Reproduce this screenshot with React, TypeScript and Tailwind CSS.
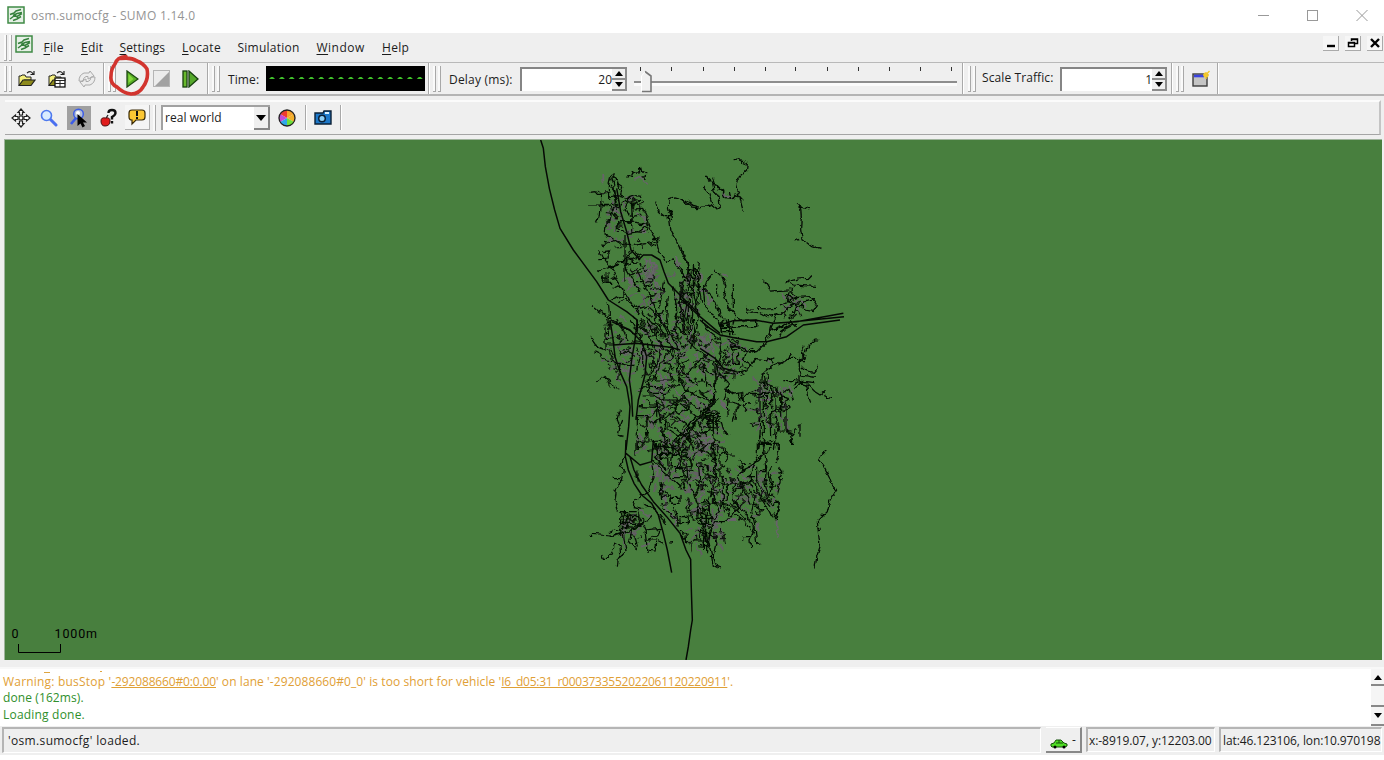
import React from "react";

const UI = "font-['Open_Sans','Noto_Sans',sans-serif] text-[12px] leading-[16px] whitespace-nowrap text-[#1c1c1c]";

/* ---------- small building blocks ---------- */

function Grip() {
  return (
    <div className="flex h-[26px] w-[8px] shrink-0 justify-between">
      <i className="w-[3px] border-r border-b border-[#a8a8a8] bg-[#fafafa]" />
      <i className="w-[3px] border-r border-b border-[#a8a8a8] bg-[#fafafa]" />
    </div>
  );
}

function Sep() {
  return <div className="h-[31px] w-[2px] shrink-0 border-l border-[#a9a9a9] bg-white" />;
}

function Logo() {
  return (
    <svg width="18" height="18" viewBox="0 0 18 18" className="shrink-0">
      <rect x="1" y="1" width="16" height="16" fill="#e6f0e6" stroke="#3f8a45" strokeWidth="1.5" />
      <path d="M3 8.500 7 7l2-2 5-1.500M6 9.500l4-2 5-1M3 13l4-3 3 .5 5-3M6 14.500l4-1.500 4-2.500M8 9l3 3" fill="none" stroke="#35803c" strokeWidth="1.500" />
    </svg>
  );
}

function Spinner() {
  return (
    <div className="flex w-[15px] flex-col bg-[#efefef]">
      <div className="flex h-[11px] items-center justify-center border-r-2 border-b-2 border-[#8c8c8c]">
        <svg width="8" height="5"><path d="M0 5 4 0 8 5z" fill="#000" /></svg>
      </div>
      <div className="flex h-[11px] items-center justify-center border-r-2 border-b-2 border-[#8c8c8c]">
        <svg width="8" height="5"><path d="M0 0 4 5 8 0z" fill="#000" /></svg>
      </div>
    </div>
  );
}

function NumberField({ value }: { value: string }) {
  return (
    <div className="flex h-[24px] w-[107px] shrink-0 border-t-2 border-l-2 border-[#858585] bg-white">
      <span className="flex-1 pt-[3px] text-right">{value}</span>
      <Spinner />
    </div>
  );
}

/* ---------- toolbar icons ---------- */

function OpenIcon({ config }: { config?: boolean }) {
  return (
    <svg width="18" height="18" viewBox="0 0 18 18" className="shrink-0">
      <path d="M1 15V6h2l1-1h3l1 2h5v3H6z" fill="#f3ee7b" stroke="#222" />
      <path d="M1 15.500 5 10h12l-4 5.500z" fill="#8d8a1c" stroke="#222" strokeWidth="1.200" />
      <path d="M9 3q4-3 6 1M12.500 4.500H16V1" fill="none" stroke="#222" strokeWidth="1.200" />
      {config && (
        <>
          <rect x="7" y="8" width="10" height="9" fill="#fff" stroke="#111" strokeWidth="1.300" />
          <path d="M7 10.500h10M12 10v7M7 13.500h10" stroke="#222" />
        </>
      )}
    </svg>
  );
}

function ReloadIcon() {
  return (
    <svg width="18" height="18" viewBox="0 0 18 18" fill="none" stroke="#aaa" className="shrink-0">
      <path d="M1 11Q1 5 6 3h5l1-2 4 5-6 3V6.500H8q-3 1-3 5zM17 7q0 6-5 8H7l-1 2-4-5 6-3v2.500h2q3-1 3-4.500z" fill="#ececec" />
    </svg>
  );
}

function PlayIcon() {
  return (
    <svg width="13" height="18" viewBox="0 0 13 18" className="shrink-0">
      <path d="M1 1v16l11-8z" fill="#58b025" stroke="#1e4a12" strokeWidth="1.3" />
      <path d="M2.5 4v9l5-4z" fill="#86d83f" />
    </svg>
  );
}

function StopIcon() {
  return (
    <svg width="17" height="17" viewBox="0 0 17 17" className="shrink-0">
      <rect x=".5" y=".5" width="16" height="16" fill="#ececec" stroke="#b5b5b5" />
      <path d="M16 2v14H2z" fill="#a2a2a2" />
    </svg>
  );
}

function StepIcon() {
  return (
    <svg width="17" height="18" viewBox="0 0 17 18" className="shrink-0">
      <rect x="1" y="1" width="4" height="16" fill="#68b92c" stroke="#173f10" strokeWidth="1.3" />
      <path d="M7 1v16l9-8z" fill="#55a82b" stroke="#173f10" strokeWidth="1.3" />
    </svg>
  );
}

function NewWindowIcon() {
  return (
    <svg width="18" height="18" viewBox="0 0 18 18" className="shrink-0">
      <rect x="1" y="4" width="14" height="12" fill="#c4c4c4" stroke="#3d3d3d" strokeWidth="1.4" />
      <path d="M2 6h10" stroke="#3b43e0" strokeWidth="2.600" />
      <path d="M14 2v7M11 5h6M12 3l4 4M17.500 1 12 7" stroke="#f3c82b" strokeWidth="1.4" />
    </svg>
  );
}

function MoveIcon() {
  return (
    <svg width="20" height="20" viewBox="0 0 20 20" fill="#fff" stroke="#222" strokeWidth="1.200" className="shrink-0">
      <path d="m10 1 3 3.500h-1.500v2.500h-3V4.500H7zM10 19l3-3.500h-1.500V13h-3v2.500H7zM1 10l3.500-3v1.500H7v3H4.500V13zM19 10l-3.500-3v1.500H13v3h2.500V13z" />
      <circle cx="10" cy="10" r="2" />
    </svg>
  );
}

function Magnifier() {
  return (
    <svg width="18" height="18" viewBox="0 0 18 18" className="shrink-0">
      <path d="m10 10 6 6" stroke="#4a6ff0" strokeWidth="3" strokeLinecap="round" />
      <circle cx="6.5" cy="6.5" r="5" fill="#d9ecff" stroke="#4d79ee" strokeWidth="1.6" />
    </svg>
  );
}

function ZoomPointer() {
  return (
    <svg width="24" height="24" viewBox="0 0 24 24" className="shrink-0">
      <path d="m9 12-5 6" stroke="#3b5ce8" strokeWidth="2.6" />
      <circle cx="11.500" cy="8" r="4.800" fill="#b4bfd6" stroke="#3d5ee6" strokeWidth="1.5" />
      <circle cx="11" cy="7" r="2" fill="#fff" />
      <path d="M10.500 8v12l3-2.500 2 4 2.500-1.500-2-3.500h4z" fill="#000" />
    </svg>
  );
}

function HelpApple() {
  return (
    <svg width="17" height="20" viewBox="0 0 17 20" className="shrink-0">
      <path d="M8.500 5q0-3 3.500-3t3.500 3q0 2-3.500 4v2.500M12 13v2.500" fill="none" stroke="#111" strokeWidth="2.4" />
      <path d="M5.500 11 8 7" stroke="#222" strokeWidth="1.3" />
      <path d="M1 13q0-4 4.500-3 4.500-1 4.500 3 0 5-5 5-4 0-4-5z" fill="#e01c1c" stroke="#4b1010" />
    </svg>
  );
}

function BubbleIcon() {
  return (
    <svg width="18" height="18" viewBox="0 0 18 18" className="shrink-0">
      <path d="M4 2h10q3 0 3 3v4q0 3-3 3H8l-4 4v-4q-3 0-3-3V5q0-3 3-3z" fill="#fcc733" stroke="#3b2b06" strokeWidth="1.2" />
      <path d="M9 3v5M9 9v2" stroke="#111" strokeWidth="2" />
    </svg>
  );
}

function ColorWheel() {
  return (
    <svg width="18" height="18" viewBox="0 0 18 18" className="shrink-0">
      <path d="M9 9V1a8 8 0 0 1 7 4z" fill="#f6a32b" />
      <path d="M9 9V1a8 8 0 0 0-7 4z" fill="#ef3b2f" />
      <path d="m9 9 7-4a8 8 0 0 1 0 8z" fill="#f4b02c" />
      <path d="m9 9 7 4a8 8 0 0 1-7 4z" fill="#6fe03a" />
      <path d="M9 9v8a8 8 0 0 1-7-4z" fill="#2fa8ea" />
      <path d="M9 9 2 13a8 8 0 0 1 0-8z" fill="#c44bd6" />
      <circle cx="9" cy="9" r="8" fill="none" stroke="#222" strokeWidth="1.3" />
    </svg>
  );
}

function CameraIcon() {
  return (
    <svg width="18" height="15" viewBox="0 0 18 15" className="shrink-0">
      <path d="M1 3h8l1-2h7v13H1z" fill="#1d78c9" stroke="#0b2036" strokeWidth="1.4" />
      <circle cx="8" cy="8.5" r="4" fill="#0b2036" />
      <circle cx="8" cy="8.5" r="2.5" fill="#8fd0f7" />
      <path d="M11 3h4" stroke="#d8f0ff" strokeWidth="2" />
    </svg>
  );
}

function CarIcon() {
  return (
    <svg width="18" height="10" viewBox="0 0 18 10" className="shrink-0">
      <path d="M1 7V5l3-1 2-3h5l3 3 3 1v2l-2 1H2z" fill="#4fdc25" stroke="#14530a" />
      <path d="M6 4h7M9 1v3" stroke="#14530a" />
      <circle cx="5" cy="8" r="1.5" />
      <circle cx="14" cy="8" r="1.5" />
    </svg>
  );
}

/* ---------- road network ---------- */

type Tile = { x: number; y: number; main?: string; roads: string; minor?: string };

/* Each tile keeps its own local grid at three units per pixel. */
const tiles: Tile[] = [
  {
    x: 530, y: 135,
    main: "M32 15 40 40 46 95 58 160 74 225 90 280 130 345 200 440 235 495 290 530 322 555 322 590M260 160 272 230 290 290 303 345 330 375M325 375 340 360 365 360 390 375 402 410 415 445 450 480 510 540",
    roads:
      "M290 128 295 120 305 125 310 112 325 110 332 98 335 110 350 115 348 130 335 128M236 195 235 150 242 122 250 120 262 150 270 165M180 172 195 170 202 178 214 178 216 208 234 208M174 210H234M210 212 208 240 202 262M250 125 262 135 265 150 278 158 272 178 285 182M234 186 262 182 290 190 310 182 334 184M234 215 250 205 268 215 288 195 304 210 330 195M240 210 245 235 238 262 224 275 222 300 240 306 265 322 288 332M262 260H300L355 268M262 258V292M264 280 290 296 325 290 355 270M292 185 305 205 306 235 305 290M310 222 338 220 350 246 365 290 380 320 384 340 410 380M278 330 310 332 370 322 385 312 370 310 362 322 378 335M308 248 335 240M310 290 350 292 356 280 340 275M285 300V440M205 415 220 400 250 392 268 378 296 374 325 385M222 330 214 326M232 324 222 322M206 348 220 372 232 376M220 350 236 348 238 372 205 374M216 425 240 428M220 418V445M228 418V445M234 418V445M218 445H244M218 365 245 400 262 440 290 480 310 515 330 540M232 400 270 388M248 430 264 425M248 460 262 452 280 460M244 495 270 485 285 470M265 500 285 490 300 505M184 514 210 532 255 560 300 590 320 600M235 500 238 530 236 600M226 570H250M300 345 290 370 285 395 310 440 330 470M282 392 302 388 310 375M300 420 335 410M310 440H338M322 400 345 450 360 480 375 520 395 560 415 600M340 460 365 450M352 485 380 475M360 510 390 500M375 540 405 530M310 510 330 520 355 512M380 200 388 232 405 245 425 245 422 230 412 236M425 255 415 215 418 192 432 186 465 195 485 210 510 218M415 245 420 285 440 320 450 345 470 380 475 405 480 450M410 380 430 375 460 420 475 440M400 440 395 480 388 520M415 480 410 550 420 600M430 455 440 520 435 560 460 600M455 450 450 510 470 560M475 450V600M490 395V470L500 520M505 380 500 430 510 470M310 545 345 590M335 530 375 570 380 600M355 520 410 570M245 125 255 170 262 225M250 160 262 200 245 230 262 250M240 150 256 170M292 205 285 225 300 240M315 345 295 355 300 375 325 365 320 352 335 360",
    minor: "M220 120V148M310 135 330 128 350 145M315 235 345 250 340 300M440 365V390H450L442 370M275 440 285 425 305 440 295 470M342 375 375 385 370 420 350 430 340 400M375 440 400 470 385 490M350 400 380 460 370 500M240 215 262 235M270 540 290 560M390 540 405 570M350 375 350 410M360 370 365 420M350 430 372 470",
  },
  {
    x: 680, y: 135,
    main: "M120 570 160 557 225 555 280 565 350 560 490 535M0 490 60 545 120 595M340 560 492 545",
    roads:
      "M164 74 178 72 186 82 202 88 200 105 172 135 168 152 172 170 180 185 182 200 190 230M80 128 105 148 125 165 135 188 155 190 175 180 190 196M98 128 105 150M110 150 130 170M70 156 85 170 95 205M98 145 102 165 118 195 120 215 112 220 100 210 85 215 72 212 55 218 35 216 0 190M148 170 152 188M165 175 168 190M78 126 112 155 136 186M348 206 362 218 364 250 362 280 366 312 380 320 395 332 424 341M350 208 388 222M343 318 360 313M250 437 262 445 275 468 300 466 325 465M320 440 355 432 385 430 392 422M320 440 340 450 405 454M338 455 335 480 350 490M318 480 340 495M330 460 322 500 340 505M202 516 206 534M202 522H222M235 520 260 522 290 520M208 535 238 532 262 545 300 538 320 520 345 505 360 515 375 500 400 495 392 482 355 484 335 495 300 510M400 495 412 512 400 530 375 525 360 510M350 510 340 540 325 550M230 557V575H140M270 600 275 570 295 535M275 585 300 580 330 560 350 575M300 590 330 570 355 565M160 450V520M100 402 115 415 130 430 138 450 132 480 145 515 165 540 190 558M98 415 80 440 72 460 90 480 108 500 120 540 140 560M70 460 75 510 90 535 110 550 122 580M110 485V450M0 335 20 375 25 400 20 430 40 470M40 390 45 440 35 490 38 540 30 600M60 400 55 450 65 500M0 390 15 430 5 470 20 510 10 560 18 600M25 400 50 405 50 430 60 460 50 510 55 550 45 600M30 430 48 430M30 450 58 455M30 475 55 480M0 440V520L12 600M120 558 125 600M140 560 150 600M165 548 155 575 165 600M120 575H165M130 590H165",
    minor: "M62 465 80 465 85 500M125 415 140 425M305 475 318 490M360 500 380 515M98 490 85 510M60 410 66 440M125 175 160 190",
  },
  {
    x: 580, y: 320,
    main: "M90 0 98 50 105 110 120 155 140 200 150 260 146 320 138 390M172 0 165 60 155 120 148 180 155 230 158 290M95 5 150 30 185 65 200 110 195 165 175 240 168 300M100 75 170 70 270 82 300 90",
    roads:
      "M30 50 50 80 75 90 98 92M46 95 65 105 75 120 100 122 112 150M52 182 68 172 85 178 108 205 118 208M75 20V90M75 40 88 35M75 55H90M76 72H104M80 0 85 20M110 0 130 30 145 65M150 0 190 70M180 0 200 40 225 90M200 0 230 50 255 90M225 0 250 40 280 90M240 0 275 45 295 90M290 0 285 40 310 85M320 0 310 30 340 80 390 120 420 125M340 0 345 40 335 90M370 0 380 30 420 60M120 110 145 90 165 110M120 130 160 140M170 80 180 110 170 150M188 70V140M185 95H200M105 130 120 130 116 180M210 95 222 120 210 160M240 90 232 130 205 180M270 90 240 135 215 190M200 180H292M250 150 270 160 280 190M185 200 260 205 300 190M185 225H220L250 240 295 240M205 180 210 220 260 220 275 205M230 240V290M200 240 210 255H240M176 260 230 262M172 290H200L204 360M172 290V390M175 365 240 360 290 390M285 90 290 150 310 200 350 230 390 240 405 235M290 130 320 170 350 200M300 100 290 135 330 120M320 165 360 120 390 100M330 200 300 240 260 260M400 120 405 180 403 240M404 240 340 300 280 370M415 235 360 290 300 360 275 390M400 250 345 310 300 390M375 270 390 280 420 280M380 290H420M385 300H420M380 310H420M385 290V330M400 285V340M412 285V340M370 320 420 325M365 345 390 330M240 300 280 280 290 250M220 310 260 280M235 270 245 310M270 260 300 280 330 260M290 290 340 330 360 350M265 310 330 360M255 320 300 350M250 340 290 390M300 250 350 290M310 230 360 270M320 330 340 390M350 300 380 350M300 345H350L370 380M255 300 250 350 260 390M118 275 112 295 120 320 115 345 130 350M128 300 120 320M260 90 280 110 255 130 280 145",
    minor: "M110 80 135 105 160 80M125 120 160 125 145 155 120 145M180 70 200 120M240 90 230 150 250 190M255 165 248 205 255 230M300 150 330 170M350 40 370 60 365 90 395 80 390 40M215 60 245 70 260 50M280 60 290 75M340 100 370 130 350 155M300 260 340 230 370 260M290 310 330 290M350 360 390 350 410 380M180 340 190 370M220 265 215 300M270 195 310 240M120 90 150 95M125 100 150 105",
  },
  {
    x: 700, y: 320,
    main: "M0 0 30 25 60 45 110 55 170 65 200 65 260 50 310 15 420 0M0 85 45 115 70 145 110 155",
    roads:
      "M60 25H95M65 0V50M85 0 90 50M125 0H170V20H110M195 70 210 35 245 20 275 0M240 50 250 30 290 10M60 50 65 90 50 140 55 160M80 60 110 75 130 95 160 85M95 70 100 95 120 80 95 75M100 100 98 130H115L112 100M115 75 150 100 165 95M140 95 130 120 160 140M150 95H170L195 70M65 90 75 105 60 150M72 160 110 158 140 150 165 115 200 120 220 110M205 110 220 130M60 155 75 180 85 190 80 215 72 240M72 210 90 215 100 222 122 218 128 240 150 215 180 205M115 220 120 240M85 245 130 255 140 270 135 275M85 230 82 260 85 290M120 250 105 275 100 305M110 280 108 300M130 245 128 215M355 60 345 60 320 85 312 115 300 120M308 80 312 115M275 100 262 118 240 130 215 140 200 152M265 115 298 115 298 150 305 165 345 172M295 125 312 125M350 130 352 145 340 160 320 155 305 140M300 165 300 190 320 195 325 225 332 245M250 182H285L345 188M280 195 310 180M285 210 300 185 320 200M320 190 345 215 360 225 375 215 380 230 396 232M200 155 185 165 182 185 200 190 205 160M190 170 195 200 205 205 200 190 225 205 240 220M150 220H210M180 190V300M190 205V290M200 215 198 260M215 200V310M228 200V270M242 215V290M250 215 270 205 280 240M240 230 265 235 255 250M240 245 272 265 258 270M258 240V330L275 335M258 335 275 340 278 372M295 315H300V350M275 345 290 325M225 290 235 330 225 360 220 390M172 390 180 350 182 290M190 300V380M210 290 212 350M175 370H235V390M60 295 70 330 90 345M45 110 48 180 40 250 0 320M35 240 10 290M20 290H60M25 300H62M20 310H55M30 285V330M40 285V330M50 290V320M0 250 30 270M0 210 25 240M0 130 40 165M10 130 20 200M0 340 40 330 45 390M150 245 130 260M205 260 195 270M210 280 245 260M0 180 38 200",
    minor: "M5 45 20 75M170 205 210 240 180 240 185 200M180 260V320M190 225 215 240M240 200 245 240M65 250 80 270 65 240M20 60 45 95M80 90 85 110M195 290 210 330M270 195 280 215 265 225M5 350 30 370 20 390M30 210 45 235M205 115 210 135M35 260 20 280",
  },
  {
    x: 580, y: 440,
    main: "M138 0 136 50 145 90 162 130 185 165 215 190 235 225 250 280 262 330 275 398M150 50 162 90 185 135 220 185 260 230 300 280 318 330 332 358 333 415 335 480 337 540 332 570 325 620 318 660M138 40 180 75 215 65 220 0",
    roads:
      "M134 50 120 80 130 90 125 120 110 145 105 180 112 215M96 108 104 116H122M118 215H170M118 225H165M120 240 170 240M122 215V275M130 215V270M140 218V265M150 220V250M135 230H180M118 250H175M32 283 60 285 95 288 160 268 215 232M88 278 105 270 130 280 150 270M92 290 130 280M175 210 182 240 195 270 200 310M130 260 175 262 182 250M195 270 240 265 235 285 200 300 230 300 250 310M200 300V330L225 333 230 308M130 280 138 335 115 355 112 380M98 330 105 312 120 320 122 340M98 330 85 355 70 355 65 342M145 300 170 330M155 270 150 300M164 285 172 320M168 0V50M170 95 175 125M215 70 222 110 200 160 165 180 160 200 190 205M215 60 245 90 280 120 310 148M225 50 260 90M240 130 245 180M250 130 240 165M245 170 270 165 270 185M270 175 300 175M272 190H300V165M270 165 285 215 295 260M240 195 270 190M250 200 300 250 300 235M295 230H325V248H295M330 190 340 245M300 270 318 285 320 310M305 285 330 310M225 0 230 50 250 80M240 0 245 60M260 0 265 90M280 10 270 80 300 80M225 20 275 20M228 40 330 50 335 75 290 85M290 0 300 50 285 100M320 0 300 70 320 130M320 75 325 130 345 165M300 90 340 95M280 110 320 110M310 130 320 155M355 70 360 130 345 165 355 200 350 230M350 200 365 240 358 300M370 200 380 240 370 330M385 200 375 260 385 320M350 235 400 235M355 250 395 260M350 270 380 290M340 300 380 300M400 230 395 270 385 300 395 350 400 380 412 385M365 120 410 110M370 90 400 140 380 200M400 0 395 50 410 100 395 160 420 220M380 45 410 60M360 30 390 10M268 308H276M268 312H276M190 190 225 210 245 235 258 260M240 130 250 150 265 165",
    minor: "M210 80H230V110H210M225 90 250 85M250 120 245 155 260 140M250 165 265 210 290 240M285 235V260M300 50 320 70 310 100M340 0 375 15 395 0M345 30 380 40M325 120 365 115M360 170V220M345 85 370 105M180 210 210 230M290 10 320 25M180 320 210 310M385 180V210",
  },
  {
    x: 700, y: 440,
    roads:
      "M382 33 368 44 358 62 375 85 388 110 395 130 410 150 390 180 382 215 352 245 355 275 360 320 350 350 345 380M352 262H362M353 268H362M354 272H360M273 0 278 10M172 0V50L160 75 150 110 155 145M172 10H195L215 0M230 12 235 45 228 66M195 0 190 35 205 38 215 10M195 35 175 60 150 80 130 90 115 110M195 40 200 80 195 130 205 170M120 60 130 80 125 95M115 75 130 85M170 80V150L180 170M175 95H200M215 80 205 100 215 130 210 160 225 170M235 80 245 95 240 125 230 160M232 95 250 100M235 110 248 120M82 132 130 128 155 125M82 132V180L65 190M100 130V180L130 210 160 260M115 110 130 150 150 190 190 210M100 180 115 200 95 230M80 195 110 210 140 240M75 200 95 230 70 245 50 245 30 270 25 310M105 225 130 240 155 270M130 140 120 170 100 195M150 150 165 170 155 215 165 260 150 300 152 322M160 150 190 185 205 210 220 235M180 145 185 170 210 200M200 175 220 195 235 185 232 240M230 180 238 210 225 235M125 290H150M128 290V305M165 260 170 310 180 318M165 215 185 220M150 235 165 235M60 45 75 35 85 60 78 70M75 25 85 45H102M50 20 60 45 60 110 80 120M60 75 75 80M60 85 50 90M70 110V190M35 20 45 60 40 90 60 130M0 30 35 40M0 60 25 55M10 75 35 95M0 75 15 90M0 120 20 135 0 150M20 150 40 160 40 190 80 195M40 190 60 210 45 240M20 195 35 230 15 260 20 300M10 200 5 250 15 290 10 330M0 220 30 225M0 250 30 250M0 270 25 280M0 310 25 320M20 280V340M25 280 45 295 48 310 40 345 50 380 60 384M35 350 45 350M215 105 220 125 210 145M140 110 165 110M95 155 130 140M110 165H130M120 70 150 75",
    minor: "M5 5 30 15 40 0M0 15 20 25M25 105 40 140M65 140V190M75 170 55 190M145 85 165 80M150 110 130 115M185 130V165M230 235V275L235 290M170 250 178 275M105 130 130 150M60 250 40 250M80 240 110 240M0 130 10 160M35 225 45 260",
  },
];

type Zone = [x: number, y: number, w: number, h: number, tilt: number, count: number];

/* Dense quarters that are filled with short side streets. */
const zones: Zone[] = [
  [608, 190, 34, 58, 1.4, 26],
  [637, 264, 26, 64, 1.1, 30],
  [674, 270, 26, 74, 1.5, 44],
  [628, 332, 72, 50, 1.2, 64],
  [640, 378, 76, 76, 0.8, 110],
  [698, 334, 46, 40, 0.6, 46],
  [756, 380, 32, 52, 1.5, 36],
  [654, 442, 66, 50, 0.4, 60],
  [690, 488, 34, 56, 1.3, 44],
  [728, 468, 50, 46, 1.1, 44],
  [618, 512, 24, 24, 0, 16],
  [782, 296, 18, 18, 0.8, 10],
  [604, 330, 26, 46, 1.2, 16],
];

function sideStreets(seed: number, share: number) {
  let s = seed;
  const rnd = () => {
    s = (s * 16807) % 2147483647;
    return s / 2147483647;
  };
  let d = "";
  for (const [x, y, w, h, tilt, count] of zones) {
    for (let i = 0; i < count * share; i++) {
      let px = x + rnd() * w;
      let py = y + rnd() * h;
      let a = tilt + (rnd() > 0.5 ? Math.PI / 2 : 0) + (rnd() - 0.5) * 0.5;
      d += `M${px.toFixed(1)} ${py.toFixed(1)}`;
      const steps = 2 + Math.floor(rnd() * 2);
      for (let k = 0; k < steps; k++) {
        const len = 2 + rnd() * 3;
        px += Math.cos(a) * len;
        py += Math.sin(a) * len;
        d += `L${px.toFixed(1)} ${py.toFixed(1)}`;
        a += rnd() > 0.6 ? Math.PI / 2 : (rnd() - 0.5) * 0.8;
      }
    }
  }
  return d;
}

const darkStreets = sideStreets(4211, 0.6);
const greyStreets = sideStreets(977, 0.8);

function Network() {
  return (
    <svg width="1377" height="520" viewBox="5 140 1377 520" className="block" fill="none">
      <filter id="bends" filterUnits="userSpaceOnUse" x="530" y="140" width="330" height="520">
        <feTurbulence type="fractalNoise" baseFrequency="0.16" numOctaves="2" seed="7" />
        <feDisplacementMap in="SourceGraphic" scale="6" xChannelSelector="R" yChannelSelector="G" />
      </filter>
      <g filter="url(#bends)">
        <path d={greyStreets} stroke="#625f63" strokeWidth="1.5" />
        {tiles.map((t, i) => (
          <path key={i} d={t.minor ?? ""} transform={`translate(${t.x} ${t.y}) scale(0.33333)`} stroke="#68646a" strokeWidth="5.5" />
        ))}
        <path d={darkStreets} stroke="#0b120a" strokeWidth="1.1" />
        {tiles.map((t, i) => (
          <path key={i} d={t.roads} transform={`translate(${t.x} ${t.y}) scale(0.33333)`} stroke="#050804" strokeWidth="3.6" />
        ))}
      </g>
      {tiles.map((t, i) => (
        <path key={i} d={t.main ?? ""} transform={`translate(${t.x} ${t.y}) scale(0.33333)`} stroke="#050804" strokeWidth="4.4" strokeLinejoin="round" />
      ))}
      <path d="M18.500 644v8.500h42V644" stroke="#000" />
      <g fill="#000" className="font-[Roboto,sans-serif] text-[12.5px]">
        <text x="11.5" y="638" textLength="7.5">0</text>
        <text x="54.5" y="638" textLength="42.5">1000m</text>
      </g>
    </svg>
  );
}

/* ---------- bars ---------- */

const menus = [
  { key: "F", rest: "ile", box: "w-[37.5px]", track: "tracking-[0.3px]" },
  { key: "E", rest: "dit", box: "w-[38.5px]", track: "tracking-[0.2px]" },
  { key: "S", rest: "ettings", box: "w-[62.5px]", track: "tracking-[0.15px]" },
  { key: "L", rest: "ocate", box: "w-[55.5px]", track: "tracking-[0.35px]" },
  { key: "", rest: "Simulation", box: "w-[79px]", track: "tracking-[0.25px]" },
  { key: "W", rest: "indow", box: "w-[65.5px]", track: "tracking-[0.5px]" },
  { key: "H", rest: "elp", box: "w-[40px]", track: "tracking-[0.3px]" },
];

function TitleBar() {
  return (
    <header className="flex h-[33px] items-center bg-white pl-[7px]">
      <div className="-mt-[3px]"><Logo /></div>
      <span className="-mt-[1px] ml-[6px] flex-1 tracking-[0.28px] text-[#949494]">osm.sumocfg - SUMO 1.14.0</span>
      <svg width="128" height="14" viewBox="0 0 128 14" fill="none" stroke="#999" className="-mt-[3px]">
        <path d="M2 7.5h11M100.500 2l11 11M111.500 2l-11 11" />
        <rect x="51.5" y="2.5" width="10" height="10" />
      </svg>
    </header>
  );
}

function MdiButton({ children }: { children: React.ReactNode }) {
  return (
    <div className="flex h-[15px] w-[16px] items-center justify-center border-r border-b border-[#aaa] bg-[#f6f6f6]">
      <svg width="12" height="12" viewBox="0 0 12 12" fill="none" stroke="#000">{children}</svg>
    </div>
  );
}

function MenuBar() {
  return (
    <nav className="flex h-[30px] border-b border-[#b9b9b9] pl-[4px]">
      <div className="pt-[2px]"><Grip /></div>
      <div className="ml-[3px] pt-[2px]"><Logo /></div>
      <div className="ml-[10.5px] flex flex-1 pt-[7px]">
        {menus.map((m) => (
          <span key={m.rest} className={`${m.box} ${m.track} shrink-0`}>
            <u className="underline-offset-2">{m.key}</u>
            {m.rest}
          </span>
        ))}
      </div>
      <div className="flex gap-[6px] pt-[3px] pr-[1px]">
        <MdiButton><path d="M2 9h8" strokeWidth="2.400" /></MdiButton>
        <MdiButton><path d="M4.500 4V2h6v4.500H8M4 2.500h7M1.500 5.500h6v4h-6zM1 6h7" strokeWidth="1.5" /></MdiButton>
        <MdiButton><path d="m2 2 8 8M10 2l-8 8" strokeWidth="2.4" /></MdiButton>
      </div>
    </nav>
  );
}

function Slider() {
  return (
    <svg width="326" height="28" viewBox="632 65 326 28" className="shrink-0">
      {[641, 672, 704, 735, 766, 796, 828, 859, 890, 921, 952].map((x) => (
        <path key={x} d={`M${x - 0.5} 67v4`} stroke="#333" />
      ))}
      <path d="M634 81h323v5H634z" fill="#fafafa" />
      <path d="M634 82h323" stroke="#8d8d8d" strokeWidth="2" />
      <path d="M641.500 91V76l4-5 5.500 5v15z" fill="#f0f0f0" />
      <path d="M645 71.500 651 76v15.500h-9" fill="none" stroke="#777" strokeWidth="1.600" />
      <path d="M641.500 91V76l3.500-4" fill="none" stroke="#fff" />
    </svg>
  );
}

function TimeDisplay() {
  return (
    <svg width="159" height="25" viewBox="0 0 159 25">
      <path d="M0 0h159v25H0z" />
      {Array.from({ length: 16 }, (_, i) => (
        <path key={i} d={`M${3 + i * 9.85} 13l2-2h2l2 2z`} fill="#3fbf2b" />
      ))}
    </svg>
  );
}

function MainToolbar() {
  return (
    <div className="flex h-[33px] border-b-2 border-[#b4b4b4] pl-[4px]">
      <div className="flex h-[31px] w-[99px] items-center">
        <Grip />
        <div className="ml-[6px] flex gap-[12px]">
          <OpenIcon />
          <OpenIcon config />
          <ReloadIcon />
        </div>
      </div>
      <Sep />
      <div className="relative flex h-[31px] w-[102px] items-center pl-[3px]">
        <Grip />
        <div className="ml-[10px] flex items-center gap-[14px]">
          <PlayIcon />
          <StopIcon />
        </div>
        <div className="ml-[12px]"><StepIcon /></div>
        <svg width="44" height="46" viewBox="0 0 44 46" className="absolute -top-[10px] left-[1px] z-10">
          <path d="M20 3.500Q11 4 9 11 5 16 5 23 4 31 11 34 17 40 25 41 33 41 37 34 43 26 41 16 37 10 31 8 25 4 15 5.500" fill="none" stroke="#d2342e" strokeWidth="3.600" strokeLinecap="round" strokeLinejoin="round" />
        </svg>
      </div>
      <Sep />
      <div className="flex h-[31px] w-[219px] items-center pl-[3px]">
        <Grip />
        <span className="mt-[2px] ml-[8px] w-[38px] tracking-[0.1px]">Time:</span>
        <TimeDisplay />
      </div>
      <Sep />
      <div className="flex h-[31px] w-[532px] items-center pl-[3px]">
        <Grip />
        <span className="mt-[2px] ml-[8px] w-[71px] tracking-[0.2px]">Delay (ms):</span>
        <NumberField value="20" />
        <div className="ml-[5px]"><Slider /></div>
      </div>
      <Sep />
      <div className="flex h-[31px] w-[207px] items-center pl-[4px]">
        <Grip />
        <span className="-mt-[2px] ml-[6px] w-[78px] tracking-[0.1px]">Scale Traffic:</span>
        <NumberField value="1" />
      </div>
      <Sep />
      <div className="flex h-[31px] w-[44px] items-center pl-[3px]">
        <Grip />
        <div className="ml-[8px]"><NewWindowIcon /></div>
      </div>
      <Sep />
    </div>
  );
}

function ViewToolbar() {
  return (
    <div className="mt-[4px] mr-[3px] mb-[4px] ml-[5px] flex h-[35px] items-center border-t-2 border-r-2 border-b border-t-[#fbfbfb] border-r-[#c4c4c4] border-b-[#a5a5a5] pb-[1px] pl-[6px]">
      <MoveIcon />
      <div className="ml-[9px]"><Magnifier /></div>
      <div className="ml-[9px] h-[24px] w-[24px] bg-[#a0a0a0]"><ZoomPointer /></div>
      <div className="ml-[9px]"><HelpApple /></div>
      <div className="ml-[8px] flex h-[25px] w-[25px] items-center justify-center border-r border-b border-[#b0b0b0] bg-[#f5f5f5]"><BubbleIcon /></div>
      <div className="ml-[3px] h-[26px] w-[3px] border-r border-[#aaa] bg-[#fafafa]" />
      <div className="ml-[5px] flex h-[25px] w-[109px] border-t-2 border-l-2 border-[#a1a1a1] bg-white">
        <span className="flex-1 pt-[3px] pl-[2px] tracking-[0.05px]">real world</span>
        <div className="flex w-[16px] items-center justify-center border-r-2 border-b-2 border-[#858585] bg-[#efefef]">
          <svg width="10" height="6"><path d="M0 0h10L5 6z" /></svg>
        </div>
      </div>
      <div className="ml-[8px]"><ColorWheel /></div>
      <div className="ml-[9px] h-[25px] w-[2px] border-l border-[#a9a9a9] bg-white" />
      <div className="ml-[7px]"><CameraIcon /></div>
      <div className="ml-[8px] h-[25px] w-[2px] border-l border-[#a9a9a9] bg-white" />
    </div>
  );
}

function MessageLog() {
  return (
    <section className="flex h-[57px] bg-white">
      <div className="flex-1 overflow-hidden pl-[3px]">
        <div className="flex h-[5px] items-end overflow-hidden text-[#dfa540]">
          <i className="mb-[1px] ml-[41px] h-px w-[6px] bg-current" />
          <i className="mb-[2px] ml-[50px] h-px w-[2px] bg-current" />
        </div>
        <p className="h-[16px] tracking-[0.08px] text-[#dfa036]">
          <span className="tracking-[0.2px]">Warning: busStop '</span><u className="tracking-[-0.15px]">-292088660#0:0.00</u>' on lane '-292088660#0_0' is too short for vehicle '<u className="tracking-[-0.25px]">I6_d05:31_r0003733552022061120220911</u>'.
        </p>
        <p className="h-[17px] tracking-[0.1px] text-[#2f8f2c]">done (162ms).</p>
        <p className="h-[16px] tracking-[0.2px] text-[#2f8f2c]">Loading done.</p>
      </div>
      <div className="flex w-[13px] flex-col justify-between bg-[#f5f5f5] pt-[2px]">
        <div className="flex h-[15px] items-center justify-center border-b-2 border-[#888]">
          <svg width="8" height="5"><path d="M0 5 4 0 8 5z" /></svg>
        </div>
        <div className="flex h-[21px] items-center justify-center border-t-2 border-b-2 border-[#888]">
          <svg width="8" height="5"><path d="M0 0h8L4 5z" /></svg>
        </div>
      </div>
    </section>
  );
}

function StatusBar() {
  return (
    <footer className="flex h-[29px] pt-[1px] pl-[2px]">
      <div className="h-[26px] w-[1039px] border-t-2 border-l-2 border-r border-b border-t-[#b5b5b5] border-r-white border-b-white border-l-[#b5b5b5] pt-[4px] pl-[4px] tracking-[0.35px]">'osm.sumocfg' loaded.</div>
      <div className="ml-[5px] flex h-[26px] w-[36px] items-center border-t border-r-2 border-b-2 border-t-white border-r-[#888] border-b-[#888] pl-[4px]">
        <div className="mt-[9px]"><CarIcon /></div>
        <span className="ml-[4px]">-</span>
      </div>
      <div className="ml-[4px] h-[25px] w-[129px] border-t-2 border-l-2 border-r border-b border-t-[#b5b5b5] border-r-white border-b-white border-l-[#b5b5b5] pt-[4px] pl-[1px] tracking-[-0.07px]">x:-8919.07, y:12203.00</div>
      <div className="ml-[4px] h-[25px] w-[163px] border-t-2 border-l-2 border-r border-b border-t-[#b5b5b5] border-r-white border-b-white border-l-[#b5b5b5] pt-[4px] pl-[2px] tracking-[-0.1px]">lat:46.123106, lon:10.970198</div>
    </footer>
  );
}

export default function App() {
  return (
    <div className={`${UI} flex h-[760px] w-[1384px] flex-col overflow-hidden bg-white`}>
      <TitleBar />
      <div className="flex h-[722px] flex-col bg-[#efefef]">
        <MenuBar />
        <MainToolbar />
        <ViewToolbar />
        <main className="ml-[4px] h-[521px] w-[1378px] border-t border-l border-[#9fb39c] bg-[#487f3e]">
          <Network />
        </main>
        <div className="h-[9px] border-b-2 border-[#f8f8f8]" />
        <MessageLog />
        <StatusBar />
      </div>
    </div>
  );
}
